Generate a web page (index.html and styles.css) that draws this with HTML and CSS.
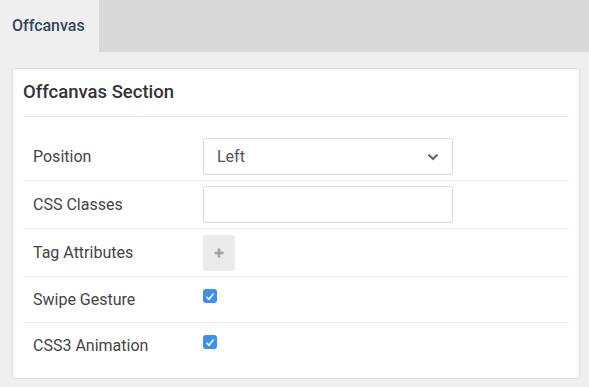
FILE: index.html
```html
<!DOCTYPE html>
<html lang="en">
<head>
  <meta charset="UTF-8">
  <meta name="viewport" content="width=device-width, initial-scale=1.0">
  <title>Offcanvas</title>
  <link rel="stylesheet" href="styles.css">
</head>
<body>
  <div class="tabs">
    <div class="tab active">Offcanvas</div>
  </div>
  <div class="content">
    <div class="card">
      <h3 class="card-title">Offcanvas Section</h3>
      <div class="card-body">
        <div class="row">
          <label class="label">Position</label>
          <div class="select">
            <span>Left</span>
            <svg width="12" height="8" viewBox="0 0 12 8"><path d="M1.5 1.5 L6 6 L10.5 1.5" fill="none" stroke="#666" stroke-width="2.2"/></svg>
          </div>
        </div>
        <div class="row">
          <label class="label">CSS Classes</label>
          <input class="input" type="text">
        </div>
        <div class="row">
          <label class="label">Tag Attributes</label>
          <button class="add">
            <svg width="10" height="10" viewBox="0 0 10 10"><path d="M5 0.5 V9.5 M0.5 5 H9.5" stroke="#a0a0a0" stroke-width="2.6"/></svg>
          </button>
        </div>
        <div class="row check-row">
          <label class="label">Swipe Gesture</label>
          <span class="check"><svg width="10" height="9" viewBox="0 0 10 9"><path d="M1.5 4.8 L4 7.2 L8.6 1.5" fill="none" stroke="#fff" stroke-width="1.6"/></svg></span>
        </div>
        <div class="row check-row">
          <label class="label">CSS3 Animation</label>
          <span class="check"><svg width="10" height="9" viewBox="0 0 10 9"><path d="M1.5 4.8 L4 7.2 L8.6 1.5" fill="none" stroke="#fff" stroke-width="1.6"/></svg></span>
        </div>
      </div>
    </div>
  </div>
</body>
</html>
```

FILE: styles.css
```css
body {
  margin: 0;
  background: #efefef;
  font-family: Roboto, "Liberation Sans", sans-serif;
  color: #444;
}

.tabs {
  display: flex;
  height: 52px;
  background: #d9d9d9;
}

.tab {
  width: 87px;
  padding-left: 12px;
  line-height: 52px;
  font-size: 16px;
  font-weight: 500;
  color: #34495e;
}

.tab.active {
  background: #efefef;
}

.content {
  padding: 16px 9px 0 12px;
}

.card {
  background: #fff;
  border: 1px solid #dcdcdc;
  border-radius: 3px;
}

.card-title {
  margin: 0 10px;
  height: 47px;
  line-height: 47px;
  font-size: 18.5px;
  font-weight: 500;
  color: #333;
  border-bottom: 1px solid #e6e6e6;
}

.card-body {
  padding: 16px 10px 10px;
}

.row {
  display: flex;
  align-items: center;
  padding: 5px 0 5px 10px;
  min-height: 37px;
  border-bottom: 1px solid #ededed;
}

.row:last-child {
  border-bottom: none;
}

.label {
  width: 170px;
  flex-shrink: 0;
  font-size: 16px;
  color: #444;
}

.select {
  box-sizing: border-box;
  width: 250px;
  height: 37px;
  border: 1px solid #d6d6d6;
  border-radius: 3px;
  display: flex;
  align-items: center;
  justify-content: space-between;
  padding: 0 13px 0 13px;
  font-size: 16px;
  color: #555;
}

.input {
  box-sizing: border-box;
  width: 250px;
  height: 37px;
  border: 1px solid #d6d6d6;
  border-radius: 3px;
  margin: 0;
}

.add {
  width: 32px;
  height: 36px;
  border: none;
  border-radius: 3px;
  background: #ebebeb;
  display: flex;
  align-items: center;
  justify-content: center;
  padding: 0;
}

.check-row {
  min-height: 34px;
  align-items: flex-start;
}

.check-row .label {
  line-height: 35px;
}

.check {
  width: 14px;
  height: 14px;
  margin-top: 7px;
  border-radius: 3px;
  background: #3a8ff0;
  display: flex;
  align-items: center;
  justify-content: center;
}
```
